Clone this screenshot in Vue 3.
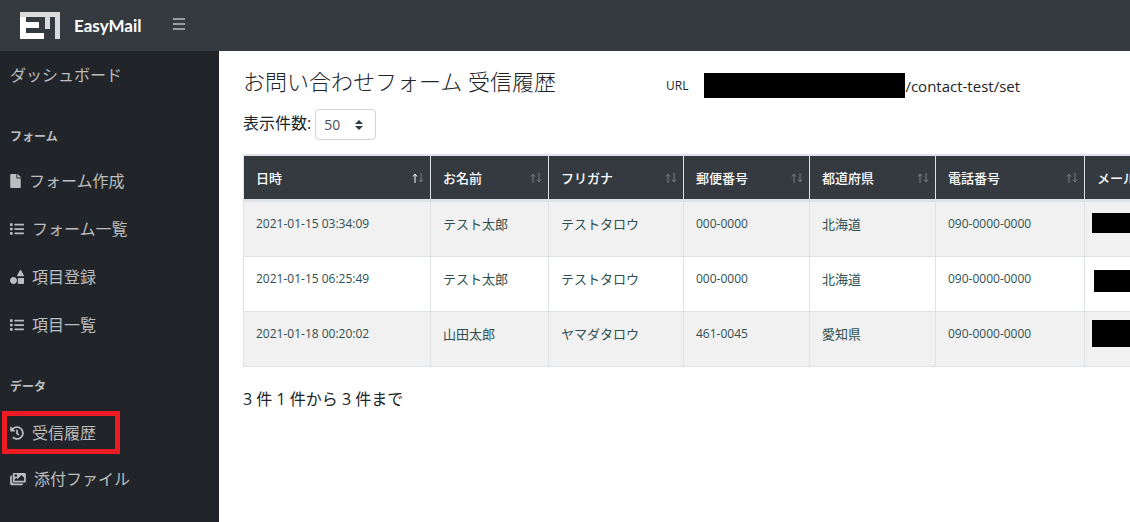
<script setup>
import { ref } from 'vue'

const pageSize = ref('50')

const icons = {
  file: {
    box: '0 0 384 512',
    size: 'narrow',
    d: 'M224 136V0H24C10.7 0 0 10.7 0 24v464c0 13.3 10.7 24 24 24h336c13.3 0 24-10.7 24-24V160H248c-13.2 0-24-10.8-24-24zm160-14.1v6.1H256V0h6.1c6.4 0 12.5 2.5 17 7l97.9 98c4.5 4.5 7 10.6 7 16.9z'
  },
  list: {
    box: '0 0 512 512',
    size: 'square',
    d: 'M80 368H16a16 16 0 0 0-16 16v64a16 16 0 0 0 16 16h64a16 16 0 0 0 16-16v-64a16 16 0 0 0-16-16zm0-320H16A16 16 0 0 0 0 64v64a16 16 0 0 0 16 16h64a16 16 0 0 0 16-16V64a16 16 0 0 0-16-16zm0 160H16a16 16 0 0 0-16 16v64a16 16 0 0 0 16 16h64a16 16 0 0 0 16-16v-64a16 16 0 0 0-16-16zm416 176H176a16 16 0 0 0-16 16v32a16 16 0 0 0 16 16h320a16 16 0 0 0 16-16v-32a16 16 0 0 0-16-16zm0-320H176a16 16 0 0 0-16 16v32a16 16 0 0 0 16 16h320a16 16 0 0 0 16-16V80a16 16 0 0 0-16-16zm0 160H176a16 16 0 0 0-16 16v32a16 16 0 0 0 16 16h320a16 16 0 0 0 16-16v-32a16 16 0 0 0-16-16z'
  },
  shapes: {
    box: '0 0 512 512',
    size: 'square',
    d: 'M128 256C57.3 256 0 313.300 0 384s57.300 128 128 128 128-57.300 128-128-57.300-128-128-128zM507 195L409 18c-11-24-39-24-50 0L261 195c-10 16 3 29 21 29h204c18 0 31-13 21-29zM480 288H320c-18 0-32 14-32 32v160c0 18 14 32 32 32h160c18 0 32-14 32-32V320c0-18-14-32-32-32z'
  },
  history: {
    box: '0 0 512 512',
    size: 'square',
    d: 'M504 255.531c.253 136.64-111.18 248.372-247.82 248.468-59.015.042-113.223-20.53-155.822-54.911-11.077-8.94-11.905-25.541-1.839-35.607l11.267-11.267c8.609-8.609 22.353-9.551 31.891-1.984C173.062 425.135 212.781 440 256 440c101.705 0 184-82.311 184-184 0-101.705-82.311-184-184-184-48.814 0-93.149 18.969-126.068 49.932l50.754 50.754c10.08 10.08 2.941 27.314-11.313 27.314H24c-8.837 0-16-7.163-16-16V38.627c0-14.254 17.234-21.393 27.314-11.314l49.372 49.372C129.209 34.136 189.552 8 256 8c136.81 0 247.747 110.78 248 247.531zm-180.912 78.784l9.823-12.63c8.138-10.463 6.253-25.542-4.21-33.679L288 256.349V152c0-13.255-10.745-24-24-24h-16c-13.255 0-24 10.745-24 24v135.651l65.409 50.874c10.463 8.137 25.541 6.253 33.679-4.21z'
  },
  images: {
    box: '0 0 576 512',
    size: 'wide',
    d: 'M480 416v16c0 26.51-21.49 48-48 48H48c-26.51 0-48-21.49-48-48V176c0-26.51 21.49-48 48-48h16v208c0 44.112 35.888 80 80 80h336zm96-80V80c0-26.51-21.49-48-48-48H144c-26.51 0-48 21.49-48 48v256c0 26.51 21.49 48 48 48h384c26.51 0 48-21.49 48-48zM256 128c0 26.51-21.49 48-48 48s-48-21.49-48-48 21.49-48 48-48 48 21.49 48 48zm-96 144l55.515-55.515c4.686-4.686 12.284-4.686 16.971 0L272 256l135.515-135.515c4.686-4.686 12.284-4.686 16.971 0L512 208v112H160v-48z'
  }
}

const groups = [
  {
    title: 'フォーム',
    items: [
      { label: 'フォーム作成', icon: icons.file },
      { label: 'フォーム一覧', icon: icons.list },
      { label: '項目登録', icon: icons.shapes },
      { label: '項目一覧', icon: icons.list }
    ]
  },
  {
    title: 'データ',
    items: [
      { label: '受信履歴', icon: icons.history, marked: true },
      { label: '添付ファイル', icon: icons.images }
    ]
  }
]

const columns = [
  { label: '日時', key: 'date', sorted: true },
  { label: 'お名前', key: 'name' },
  { label: 'フリガナ', key: 'kana' },
  { label: '郵便番号', key: 'zip' },
  { label: '都道府県', key: 'pref' },
  { label: '電話番号', key: 'tel' },
  { label: 'メールアドレス', key: 'mail' }
]

const rows = [
  { date: '2021-01-15 03:34:09', name: 'テスト太郎', kana: 'テストタロウ', zip: '000-0000', pref: '北海道', tel: '090-0000-0000' },
  { date: '2021-01-15 06:25:49', name: 'テスト太郎', kana: 'テストタロウ', zip: '000-0000', pref: '北海道', tel: '090-0000-0000' },
  { date: '2021-01-18 00:20:02', name: '山田太郎', kana: 'ヤマダタロウ', zip: '461-0045', pref: '愛知県', tel: '090-0000-0000' }
]
const numeric = ['date', 'zip', 'tel']
</script>

<template>
  <div class="app">
    <header class="topbar">
      <a class="brand" href="#">
        <svg class="logo" viewBox="0 0 40 27" aria-hidden="true">
          <path fill="#fff" d="M0 5h6v5h13v6H6v5h18v6H0z" />
          <path fill="#d9dadb" d="M0 0h40v27h-5V5h-5v12h-5V5H0z" />
        </svg>
        <span>EasyMail</span>
      </a>
      <button class="toggle" type="button" aria-label="メニュー">
        <svg viewBox="0 0 12 12" aria-hidden="true">
          <path d="M0 1h12M0 6h12M0 11h12" stroke="currentColor" stroke-width="2" />
        </svg>
      </button>
    </header>

    <div class="body">
      <nav class="sidebar">
        <a class="item" href="#">ダッシュボード</a>
        <section v-for="group in groups" :key="group.title">
          <h2>{{ group.title }}</h2>
          <a v-for="item in group.items" :key="item.label" class="item" :class="{ marked: item.marked }" href="#">
            <svg :class="item.icon.size" :viewBox="item.icon.box" aria-hidden="true"><path :d="item.icon.d" /></svg>
            <span>{{ item.label }}</span>
          </a>
        </section>
      </nav>

      <main>
        <div class="heading">
          <h1>お問い合わせフォーム 受信履歴</h1>
          <div class="url">
            <span class="url-label">URL</span>
            <span class="mask"></span>
            <span class="path">/contact-test/set</span>
          </div>
        </div>

        <div class="length">
          <label for="page-size">表示件数:</label>
          <span class="select">
            <select id="page-size" v-model="pageSize">
              <option>10</option>
              <option>50</option>
              <option>100</option>
            </select>
            <svg viewBox="0 0 8 10" aria-hidden="true"><path d="M4 0l4 4H0zM4 10L0 6h8z" /></svg>
          </span>
        </div>

        <table>
          <colgroup>
            <col v-for="c in columns" :key="c.key" :class="'col-' + c.key" />
          </colgroup>
          <thead>
            <tr>
              <th v-for="c in columns" :key="c.key" scope="col">
                <div class="th">
                  <span>{{ c.label }}</span>
                  <svg class="sort" viewBox="0 0 12 10" aria-hidden="true">
                    <path :class="{ on: c.sorted }" d="M3 10V1M1 3.500L3 1l2 2.500" />
                    <path d="M9 0v9M7 6.500L9 9l2-2.500" />
                  </svg>
                </div>
              </th>
            </tr>
          </thead>
          <tbody>
            <tr v-for="row in rows" :key="row.date">
              <td v-for="c in columns" :key="c.key" :class="{ numeric: numeric.includes(c.key), mail: c.key === 'mail' }">
                <span v-if="c.key === 'mail'" class="mask-mail"></span>
                <template v-else>{{ row[c.key] }}</template>
              </td>
            </tr>
          </tbody>
        </table>

        <p class="info">3 件 1 件から 3 件まで</p>
      </main>
    </div>
  </div>
</template>

<style>
body {
  margin: 0;
}
</style>

<style scoped>
.app {
  display: flex;
  flex-direction: column;
  min-height: 100vh;
  background: #fff;
  color: #212529;
  font-family: "Open Sans", "Noto Sans CJK JP", sans-serif;
  font-size: 16px;
  line-height: 24px;
}
* {
  box-sizing: border-box;
}
a {
  color: inherit;
  text-decoration: none;
}
.topbar {
  display: flex;
  align-items: center;
  height: 51px;
  padding-left: 20px;
  gap: 32px;
  background: #343a40;
}
.brand {
  display: flex;
  align-items: center;
  gap: 14px;
  color: #fff;
  font-family: Lato, sans-serif;
  font-size: 17px;
  font-weight: 700;
}
.logo {
  width: 40px;
  height: 27px;
}
.toggle {
  display: flex;
  padding: 0 0 4px;
  border: 0;
  background: none;
  color: #9a9da0;
}
.toggle svg {
  width: 12px;
  height: 12px;
}
.body {
  display: flex;
  flex: 1;
}
.sidebar {
  flex: 0 0 219px;
  background: #212529;
  color: #bcbdbf;
}
.item {
  display: flex;
  align-items: center;
  gap: 8px;
  height: 48px;
  padding: 0 10px;
}
.item svg {
  height: 14px;
  fill: currentColor;
}
.narrow {
  width: 11px;
}
.square {
  width: 14px;
}
.wide {
  width: 16px;
}
.sidebar h2 {
  margin: 0;
  padding: 29px 10px 11px;
  font-size: 12px;
  font-weight: 700;
  line-height: 18px;
}
.marked {
  width: 118px;
  height: 43px;
  margin: 4px 2px 1px;
  padding: 0 3px;
  border: 5px solid #ed1c24;
}
main {
  flex: 1;
  min-width: 0;
  overflow: hidden;
  padding: 16px 0 0 24px;
}
.heading {
  display: grid;
  grid-template-columns: 423px auto;
  align-items: start;
}
h1 {
  margin: 0;
  font-size: 22px;
  font-weight: 300;
  line-height: 28px;
}
.url {
  display: flex;
  align-items: center;
  padding-top: 6px;
  font-size: 15px;
}
.url-label {
  margin-right: 16px;
  font-size: 12px;
}
.mask {
  width: 201px;
  height: 25px;
  background: #000;
}
.length {
  display: flex;
  align-items: flex-start;
  gap: 4px;
  margin: 11px 0 14px;
  line-height: 28px;
}
.select {
  position: relative;
  display: flex;
}
select {
  width: 61px;
  height: 31px;
  padding: 0 8px;
  appearance: none;
  border: 1px solid #ced4da;
  border-radius: 4px;
  background: #fff;
  color: #495057;
  font: inherit;
  font-size: 14px;
}
.select svg {
  position: absolute;
  top: 11px;
  right: 13px;
  width: 8px;
  height: 10px;
  fill: #343a40;
  pointer-events: none;
}
table {
  width: 1040px;
  table-layout: fixed;
  border-collapse: collapse;
  font-size: 13px;
  line-height: 20px;
}
.col-date {
  width: 187px;
}
.col-name {
  width: 118px;
}
.col-kana {
  width: 135px;
}
.col-zip,
.col-pref {
  width: 126px;
}
.col-tel {
  width: 149px;
}
th,
td {
  border: 1px solid #dee2e6;
  text-align: left;
  vertical-align: top;
}
th {
  padding: 12px 6px 11px 12px;
  border-top-width: 2px;
  border-bottom-width: 3px;
  background: #343a40;
  color: #fff;
  font-weight: 500;
}
.th {
  display: flex;
  align-items: center;
  justify-content: space-between;
  white-space: nowrap;
}
.sort {
  width: 12px;
  height: 10px;
  fill: none;
  stroke: #7b7f84;
}
.sort .on {
  stroke: #fff;
}
td {
  padding: 12px 12px 22px;
  color: #2f4f4f;
  white-space: nowrap;
}
.numeric {
  font-size: 12px;
}
tbody tr:nth-child(odd) {
  background: #f1f1f1;
}
.mail {
  padding: 11px 7px;
}
.mask-mail {
  display: block;
  height: 20px;
  background: #000;
}
tr:nth-child(2) .mail {
  padding: 13px 9px;
}
tr:nth-child(2) .mask-mail {
  height: 22px;
}
tr:nth-child(3) .mail {
  padding: 8px 7px;
}
tr:nth-child(3) .mask-mail {
  height: 27px;
}
.info {
  margin: 20px 0;
}
</style>
